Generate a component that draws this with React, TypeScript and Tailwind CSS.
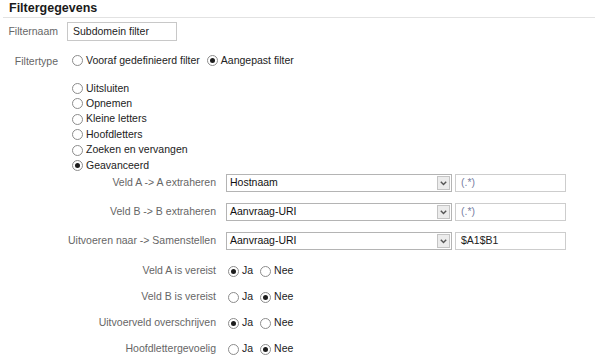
const font = { fontFamily: '"Liberation Sans", Arial, sans-serif' };

const Radio = ({ checked }: { checked?: boolean }) => (
	<span className="flex h-[11px] w-[11px] shrink-0 items-center justify-center rounded-full border border-[#8c8c8c] bg-white">
		{checked && <span className="h-[5px] w-[5px] rounded-full bg-[#1e1e1e]" />}
	</span>
);

const RadioOption = ({ label, checked }: { label: string; checked?: boolean }) => (
	<label className="flex items-center gap-[3px] text-[#222]">
		<Radio checked={checked} />
		<span>{label}</span>
	</label>
);

const Chevron = () => (
	<svg width="7" height="5" viewBox="0 0 7 5" aria-hidden="true">
		<path d="M0.8 0.8 L3.5 3.6 L6.2 0.8" fill="none" stroke="#555" strokeWidth="1.4" />
	</svg>
);

const fieldRows = [
	{ label: "Veld A -> A extraheren", select: "Hostnaam", value: "(.*)", placeholder: true },
	{ label: "Veld B -> B extraheren", select: "Aanvraag-URI", value: "(.*)", placeholder: true },
	{ label: "Uitvoeren naar -> Samenstellen", select: "Aanvraag-URI", value: "$A1$B1", placeholder: false },
];

const yesNoRows = [
	{ label: "Veld A is vereist", yes: true },
	{ label: "Veld B is vereist", yes: false },
	{ label: "Uitvoerveld overschrijven", yes: true },
	{ label: "Hoofdlettergevoelig", yes: false },
];

const options = ["Uitsluiten", "Opnemen", "Kleine letters", "Hoofdletters", "Zoeken en vervangen", "Geavanceerd"];

export default function App() {
	return (
		<div className="h-[363px] w-[595px] overflow-hidden bg-white text-[10.5px] text-[#222]" style={font}>
			{/* header */}
			<div className="ml-[3px] border-b border-[#e2e2e2] pb-[2px] pl-[6px] pt-[2px]">
				<h2 className="text-[12.5px] font-bold leading-[13px] text-[#1a1a1a]">Filtergegevens</h2>
			</div>

			{/* filternaam */}
			<div className="mt-[4px] flex items-center">
				<div className="w-[58px] text-right text-[#666]">Filternaam</div>
				<div className="ml-[9px] flex h-[19px] w-[110px] items-center border border-[#c8c8c8] pl-[5px] text-[#222]">
					Subdomein filter
				</div>
			</div>

			{/* filtertype */}
			<div className="mt-[10px] flex items-center">
				<div className="mt-[3px] w-[58px] text-right text-[#666]">Filtertype</div>
				<div className="ml-[14px] flex items-center gap-[7px]">
					<RadioOption label="Vooraf gedefinieerd filter" />
					<RadioOption label="Aangepast filter" checked />
				</div>
			</div>

			{/* options */}
			<div className="ml-[72px] mt-[11px] flex flex-col">
				{options.map((o) => (
					<div key={o} className="flex h-[15.4px] items-center">
						<RadioOption label={o} checked={o === "Geavanceerd"} />
					</div>
				))}
			</div>

			{/* advanced fields */}
			<div className="mt-[1px] flex flex-col gap-[11px]">
				{fieldRows.map((r) => (
					<div key={r.label} className="flex h-[18px] items-center">
						<div className="w-[216px] text-right text-[#666]">{r.label}</div>
						<div className="ml-[10px] flex h-[18px] w-[226px] items-center border border-[#b4b4b4] bg-white">
							<span className="flex-1 pl-[3px] text-[#111]">{r.select}</span>
							<span className="mr-[1px] flex h-[14px] w-[13px] items-center justify-center border border-[#c4c4c4] bg-[#ececec]">
								<Chevron />
							</span>
						</div>
						<div
							className={`ml-[3px] flex h-[18px] w-[111px] items-center border border-[#cdcdcd] pl-[5px] ${
								r.placeholder ? "text-[#7a7fa3]" : "text-[#222]"
							}`}
						>
							{r.value}
						</div>
					</div>
				))}
			</div>

			{/* yes / no */}
			<div className="mt-[14px] flex flex-col gap-[12px]">
				{yesNoRows.map((r) => (
					<div key={r.label} className="flex h-[14px] items-center">
						<div className="w-[216px] text-right text-[#666]">{r.label}</div>
						<div className="ml-[12px] flex items-center gap-[7px]">
							<RadioOption label="Ja" checked={r.yes} />
							<RadioOption label="Nee" checked={!r.yes} />
						</div>
					</div>
				))}
			</div>
		</div>
	);
}
